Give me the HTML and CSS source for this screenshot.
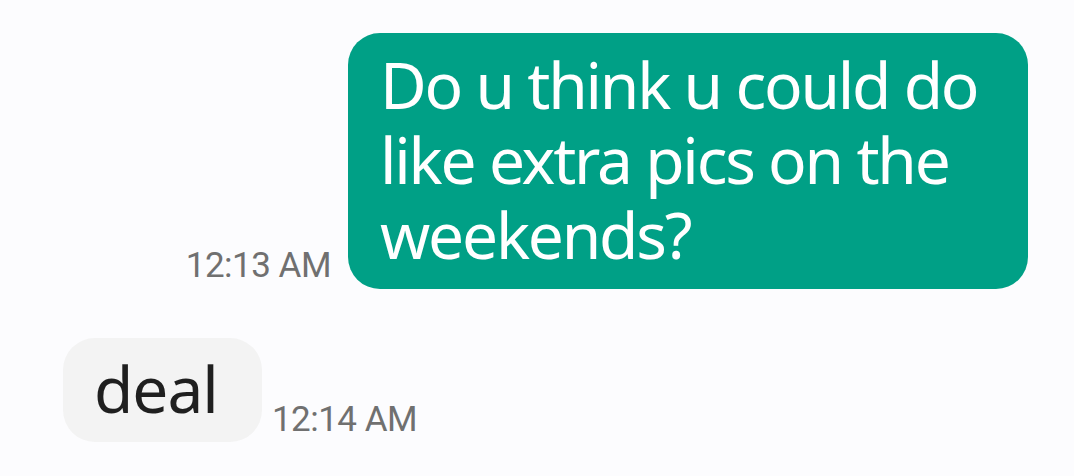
FILE: index.html
```html
<!DOCTYPE html>
<html>
<head>
<meta charset="utf-8">
<link rel="stylesheet" href="styles.css">
</head>
<body>
<div class="chat">
  <div class="row out">
    <span class="time">12:13 AM</span>
    <div class="bubble sent">Do u think u could do like extra pics on the weekends?</div>
  </div>
  <div class="row in">
    <div class="bubble recv">deal</div>
    <span class="time">12:14 AM</span>
  </div>
</div>
</body>
</html>
```
FILE: styles.css
```css
html, body {
  margin: 0;
  padding: 0;
  background: #fcfcfe;
}
.chat {
  display: flex;
  flex-direction: column;
  gap: 49px;
  padding: 33px 46px 0 63px;
  font-family: "Noto Sans", sans-serif;
}
.row {
  display: flex;
  align-items: flex-end;
}
.row.out {
  justify-content: flex-end;
  gap: 17px;
}
.row.in {
  justify-content: flex-start;
  gap: 10px;
}
.bubble {
  border-radius: 32px;
  font-size: 64px;
}
.sent {
  background: #00a086;
  color: #ffffff;
  width: 680px;
  box-sizing: border-box;
  line-height: 75px;
  letter-spacing: -2.2px;
  padding: 14px 28px 17px 32px;
}
.recv {
  background: #f3f3f3;
  color: #1f1f1f;
  line-height: 76px;
  letter-spacing: -1px;
  padding: 13px 44px 15px 31px;
}
.time {
  font-family: Roboto, sans-serif;
  font-size: 35px;
  line-height: 36px;
  letter-spacing: -0.5px;
  color: #707070;
}
.out .time {
  padding-bottom: 5px;
}
.in .time {
  padding-bottom: 4px;
}
```
